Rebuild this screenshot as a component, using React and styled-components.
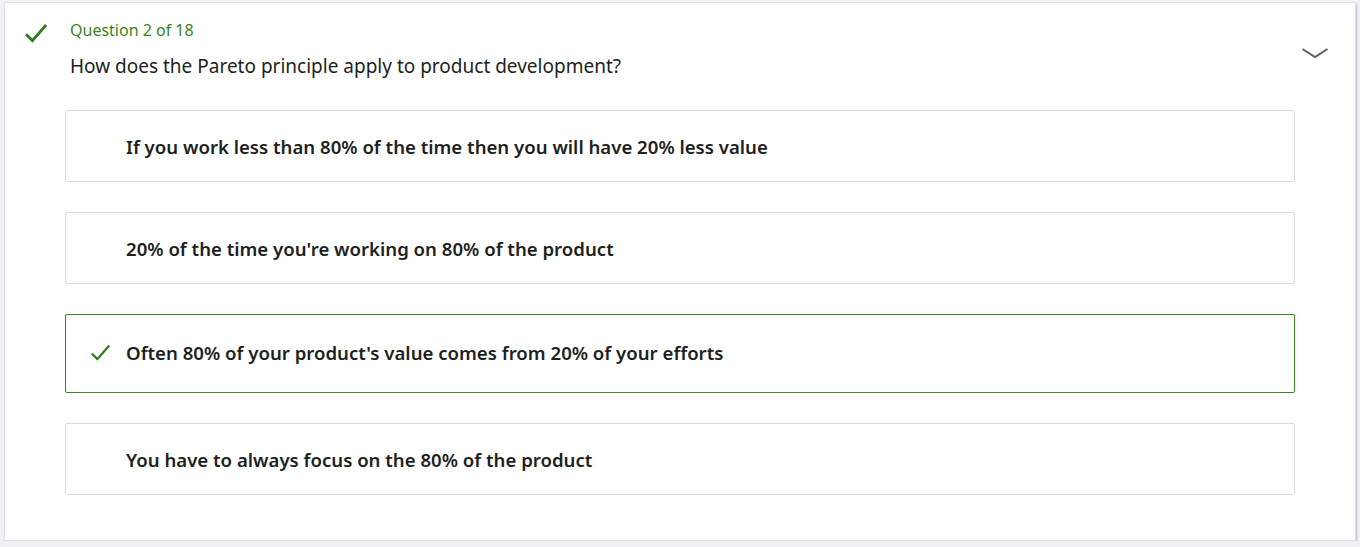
import React from "react";
import styled, { createGlobalStyle } from "styled-components";

const Global = createGlobalStyle`
  body {
    margin: 0;
    background: #eef1f5;
    font-family: "Noto Sans", "Open Sans", sans-serif;
  }
`;

const Card = styled.div`
  box-sizing: border-box;
  margin: 2px 0 0 4px;
  width: 1352px;
  height: 539px;
  background: #ffffff;
  border: 1px solid #e1e1e1;
  box-shadow: 1px 2px 2px rgba(0, 0, 0, 0.22);
  position: relative;
`;

const Header = styled.div`
  display: flex;
  padding: 16px 0 0 19px;
`;

const HeadIcon = styled.div`
  width: 46px;
  padding-top: 2px;
`;

const HeadText = styled.div`
  display: flex;
  flex-direction: column;
`;

const Label = styled.div`
  font-size: 16px;
  line-height: 22px;
  color: #3b8420;
`;

const Title = styled.div`
  margin-top: 12px;
  font-size: 19px;
  line-height: 26px;
  color: #201f1e;
`;

const Chevron = styled.div`
  position: absolute;
  right: 26px;
  top: 40px;
`;

const Options = styled.div`
  display: flex;
  flex-direction: column;
  gap: 30px;
  margin: 31px 0 0 60px;
  width: 1230px;
`;

const Option = styled.div`
  box-sizing: border-box;
  display: flex;
  align-items: center;
  height: ${(p) => (p.$selected ? "79px" : "72px")};
  padding-left: ${(p) => (p.$selected ? "24px" : "60px")};
  padding-bottom: ${(p) => (p.$selected ? "3px" : "0")};
  border: 1px solid ${(p) => (p.$selected ? "#3a8a1a" : "#dcdcdc")};
  border-radius: 2px;
  font-size: 18.6px;
  font-weight: 600;
  color: #201f1e;
  gap: 15px;
`;

const Check = ({ size, weight }) => (
  <svg width={size} height={size} viewBox="0 0 24 24" fill="none">
    <path d="M2 13.2 L8.4 19.6 L22 4" stroke="#2f7d1a" strokeWidth={weight} />
  </svg>
);

const options = [
  "If you work less than 80% of the time then you will have 20% less value",
  "20% of the time you're working on 80% of the product",
  "Often 80% of your product's value comes from 20% of your efforts",
  "You have to always focus on the 80% of the product",
];

export default function App() {
  return (
    <>
      <Global />
      <Card>
        <Header>
          <HeadIcon>
            <Check size={24} weight={2.8} />
          </HeadIcon>
          <HeadText>
            <Label>Question 2 of 18</Label>
            <Title>How does the Pareto principle apply to product development?</Title>
          </HeadText>
        </Header>
        <Chevron>
          <svg width="28" height="14" viewBox="0 0 28 14">
            <path d="M1.5 3 L14 11 L26.5 3" stroke="#605e5c" strokeWidth="2" fill="none" />
          </svg>
        </Chevron>
        <Options>
          {options.map((o, i) => (
            <Option key={i} $selected={i === 2}>
              {i === 2 && <Check size={21} weight={2.6} />}
              {o}
            </Option>
          ))}
        </Options>
      </Card>
    </>
  );
}
